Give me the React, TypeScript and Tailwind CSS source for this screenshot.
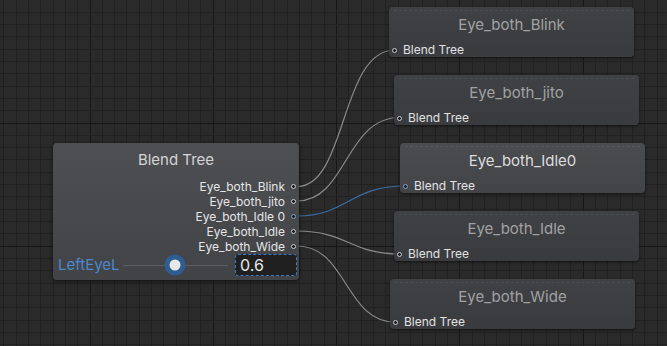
import React from 'react'

const FONT = { fontFamily: 'Inter, "Noto Sans", sans-serif' }

// Unity-ish animator grid: 12.33px minor, every 10th is major
const STEP = 123.333 / 10

function gridLines() {
  const v: { p: number; major: boolean }[] = []
  const h: { p: number; major: boolean }[] = []
  for (let k = -8; k <= 47; k++) {
    const x = 90 + k * STEP
    if (x >= 0 && x <= 667) v.push({ p: Math.floor(x) + 0.5, major: k % 10 === 0 })
  }
  for (let k = -10; k <= 19; k++) {
    const y = 123 + k * STEP
    if (y >= 0 && y <= 346) h.push({ p: Math.floor(y) + 0.5, major: k % 10 === 0 })
  }
  return { v, h }
}

const WIRES = [
  { d: 'M297 186.5 C347 186.5 340 50 395 50', blue: false },
  { d: 'M297 201 C347 201 345 117.5 400 117.5', blue: false },
  { d: 'M297 216 C347 216 350 186 405 186', blue: true },
  { d: 'M297 231 C347 231 350 254 400 254', blue: false },
  { d: 'M297 246 C347 246 345 322 395 322', blue: false },
]

const STATES = [
  { title: 'Eye_both_Blink', pos: 'left-[389px] top-[7px]', active: false },
  { title: 'Eye_both_jito', pos: 'left-[394px] top-[75px]', active: false },
  { title: 'Eye_both_Idle0', pos: 'left-[400px] top-[143px]', active: true },
  { title: 'Eye_both_Idle', pos: 'left-[394px] top-[211px]', active: false },
  { title: 'Eye_both_Wide', pos: 'left-[390px] top-[279px]', active: false },
]

const OUTPUTS = ['Eye_both_Blink', 'Eye_both_jito', 'Eye_both_Idle 0', 'Eye_both_Idle', 'Eye_both_Wide']

function Port({ blue }: { blue?: boolean }) {
  return (
    <div
      className={`w-[5px] h-[5px] shrink-0 rounded-full border bg-[#1c1c1c] ${
        blue ? 'border-[#7fa8d8]' : 'border-[#cfcfcf]'
      }`}
    />
  )
}

function StateNode({ title, pos, active }: { title: string; pos: string; active: boolean }) {
  return (
    <div
      className={`absolute ${pos} w-[245px] h-[50px] rounded-[4px] flex flex-col shadow-[0_1px_3px_rgba(0,0,0,0.6)] bg-gradient-to-b ${
        active ? 'from-[#4a4c50] to-[#424448]' : 'from-[#3f4145] to-[#393b3f]'
      }`}
    >
      <div className="pt-[3px] px-[5px]">
        <div className={`border-t border-dashed ${active ? 'border-[#56585c]' : 'border-[#4b4d51]'}`} />
      </div>
      <div
        className={`h-[30px] flex items-center justify-center text-[15px] ${
          active ? 'text-[#dddddd]' : 'text-[#a2a2a2]'
        }`}
      >
        {title}
      </div>
      <div className="mt-[4px] h-[14px] flex items-center pl-[3px] gap-[6px]">
        <Port blue={active} />
        <span className="text-[12px] leading-[14px] text-[#e2e2e2]">Blend Tree</span>
      </div>
    </div>
  )
}

function BlendTreeNode() {
  return (
    <div className="absolute left-[53px] top-[143px] w-[246px] h-[137px] rounded-[4px] flex flex-col bg-gradient-to-b from-[#4d4f53] to-[#414347] shadow-[0_1px_4px_rgba(0,0,0,0.6)]">
      <div className="h-[34px] flex items-center justify-center text-[15px] text-[#d4d4d4]">Blend Tree</div>
      <div className="pt-[2px] flex flex-col">
        {OUTPUTS.map((o, i) => (
          <div key={o} className="h-[15px] flex items-center justify-end gap-[6px] pr-[3px]">
            <span className="text-[12px] text-[#e6e6e6]">{o}</span>
            <Port blue={i === 2} />
          </div>
        ))}
      </div>
      <div className="h-[22px] flex items-center pl-[5px] pr-[2px]">
        <span className="text-[15px] text-[#4d88cc]">LeftEyeL</span>
        <div className="relative flex-1 h-[22px] ml-[3px] mr-[7px] flex items-center">
          <div className="w-full h-px bg-[#5e5e5e]" />
          <div className="absolute left-1/2 top-1/2 -translate-x-1/2 -translate-y-1/2 w-[21px] h-[21px] rounded-full bg-[#2d5d92] flex items-center justify-center">
            <div className="w-[11px] h-[11px] rounded-full bg-[#e8e8e8]" />
          </div>
        </div>
        <div className="w-[62px] h-[22px] rounded-[3px] border border-dashed border-[#3c7cc2] bg-[#202020] pl-[4px] flex items-center text-[16px] text-[#e8e8e8]">
          0.6
        </div>
      </div>
    </div>
  )
}

export default function App() {
  const { v, h } = gridLines()
  return (
    <div className="relative w-[667px] h-[346px] overflow-hidden bg-[#2a2a2a]" style={FONT}>
      {/* grid + wires */}
      <svg className="absolute inset-0" width="667" height="346">
        {v.map((l, i) => (
          <line
            key={'v' + i}
            x1={l.p}
            x2={l.p}
            y1={0}
            y2={346}
            stroke={l.major ? '#171717' : '#212121'}
            strokeWidth={1}
            shapeRendering="crispEdges"
          />
        ))}
        {h.map((l, i) => (
          <line
            key={'h' + i}
            x1={0}
            x2={667}
            y1={l.p}
            y2={l.p}
            stroke={l.major ? '#171717' : '#212121'}
            strokeWidth={1}
            shapeRendering="crispEdges"
          />
        ))}
        {WIRES.map((w, i) => (
          <path key={i} d={w.d} fill="none" stroke={w.blue ? '#3b6da6' : '#8a8a8a'} strokeWidth={1.2} />
        ))}
      </svg>

      <BlendTreeNode />
      {STATES.map(s => (
        <StateNode key={s.title} {...s} />
      ))}
    </div>
  )
}
